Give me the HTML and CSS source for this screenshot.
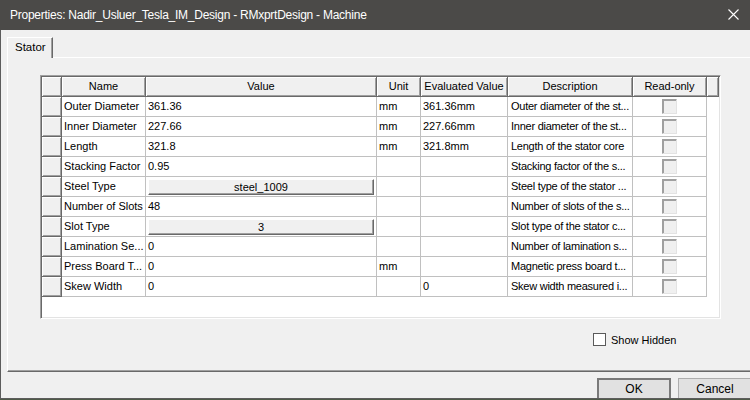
FILE: index.html
```html
<!DOCTYPE html>
<html>
<head>
<meta charset="utf-8">
<link rel="stylesheet" href="styles.css">
</head>
<body>
<div class="dialog">
  <div class="titlebar">
    <span class="title">Properties: Nadir_Usluer_Tesla_IM_Design - RMxprtDesign - Machine</span>
    <svg class="close" width="11" height="11" viewBox="0 0 11 11"><path d="M0.5 0.5 L10.5 10.5 M10.5 0.5 L0.5 10.5" stroke="#ffffff" stroke-width="1.1" fill="none"/></svg>
  </div>
  <div class="content">
    <div class="tabs"><div class="tab">Stator</div></div>
    <div class="panel">
      <div class="grid">
        <table class="props">
          <thead>
            <tr>
              <th class="w-rh"></th>
              <th class="w-name">Name</th>
              <th class="w-value">Value</th>
              <th class="w-unit">Unit</th>
              <th class="w-eval">Evaluated Value</th>
              <th class="w-desc">Description</th>
              <th class="w-ro">Read-only</th>
              <th class="w-extra"></th>
            </tr>
          </thead>
          <tbody>
            <tr><td class="rh"></td><td>Outer Diameter</td><td>361.36</td><td>mm</td><td>361.36mm</td><td class="desc">Outer diameter of the st...</td><td class="ro"><span class="ro-box"></span></td><td class="blank"></td></tr>
            <tr><td class="rh"></td><td>Inner Diameter</td><td>227.66</td><td>mm</td><td>227.66mm</td><td class="desc">Inner diameter of the st...</td><td class="ro"><span class="ro-box"></span></td><td class="blank"></td></tr>
            <tr><td class="rh"></td><td>Length</td><td>321.8</td><td>mm</td><td>321.8mm</td><td class="desc">Length of the stator core</td><td class="ro"><span class="ro-box"></span></td><td class="blank"></td></tr>
            <tr><td class="rh"></td><td>Stacking Factor</td><td>0.95</td><td></td><td></td><td class="desc">Stacking factor of the s...</td><td class="ro"><span class="ro-box"></span></td><td class="blank"></td></tr>
            <tr><td class="rh"></td><td>Steel Type</td><td class="btn-cell"><span class="cell-btn">steel_1009</span></td><td></td><td></td><td class="desc">Steel type of the stator ...</td><td class="ro"><span class="ro-box"></span></td><td class="blank"></td></tr>
            <tr><td class="rh"></td><td>Number of Slots</td><td>48</td><td></td><td></td><td class="desc">Number of slots of the s...</td><td class="ro"><span class="ro-box"></span></td><td class="blank"></td></tr>
            <tr><td class="rh"></td><td>Slot Type</td><td class="btn-cell"><span class="cell-btn">3</span></td><td></td><td></td><td class="desc">Slot type of the stator c...</td><td class="ro"><span class="ro-box"></span></td><td class="blank"></td></tr>
            <tr><td class="rh"></td><td>Lamination Se...</td><td>0</td><td></td><td></td><td class="desc">Number of lamination s...</td><td class="ro"><span class="ro-box"></span></td><td class="blank"></td></tr>
            <tr><td class="rh"></td><td>Press Board T...</td><td>0</td><td>mm</td><td></td><td class="desc">Magnetic press board t...</td><td class="ro"><span class="ro-box"></span></td><td class="blank"></td></tr>
            <tr><td class="rh"></td><td>Skew Width</td><td>0</td><td></td><td>0</td><td class="desc">Skew width measured i...</td><td class="ro"><span class="ro-box"></span></td><td class="blank"></td></tr>
          </tbody>
        </table>
      </div>
      <div class="show-hidden"><span class="cb"></span><span class="cb-label">Show Hidden</span></div>
    </div>
    <div class="buttons">
      <div class="btn btn-default">OK</div>
      <div class="btn">Cancel</div>
    </div>
  </div>
</div>
</body>
</html>
```

FILE: styles.css
```css
html, body {
  margin: 0;
  padding: 0;
  background: #4f5a48;
  overflow: hidden;
}

.dialog {
  width: 750px;
  height: 399px;
  background: #f0f0f0;
  display: flex;
  flex-direction: column;
  overflow: hidden;
  font-family: "Liberation Sans", Arial, sans-serif;
  font-size: 11px;
  color: #000;
}

.titlebar {
  height: 30px;
  flex: none;
  background: #4b4a48;
  color: #ffffff;
  display: flex;
  align-items: center;
  padding-left: 10px;
  font-size: 12px;
  letter-spacing: -0.25px;
}

.title {
  flex: 1;
  white-space: nowrap;
  margin-top: -1px;
}

.close {
  margin-right: 11px;
  margin-top: -2px;
}

.content {
  flex: 1;
  border-left: 1px solid #5c5c5c;
  border-bottom: 1px solid #5c5c5c;
  padding: 7px 0 0 6px;
  display: flex;
  flex-direction: column;
  overflow: hidden;
}

.tabs {
  display: flex;
  height: 20px;
  flex: none;
}

.tab {
  box-sizing: border-box;
  width: 46px;
  height: 21px;
  border-left: 1px solid #ffffff;
  border-top: 1px solid #ffffff;
  border-right: 1px solid #696969;
  box-shadow: inset -1px 0 #a0a0a0;
  background: #f0f0f0;
  padding-left: 7px;
  line-height: 18px;
  font-size: 11.5px;
  position: relative;
  z-index: 1;
}

.panel {
  box-sizing: border-box;
  height: 315px;
  flex: none;
  border-top: 1px solid #ffffff;
  border-left: 1px solid #ffffff;
  border-bottom: 1px solid #696969;
  box-shadow: inset 0 -1px #a0a0a0;
  padding: 17px 0 0 32px;
}

.grid {
  box-sizing: border-box;
  width: 681px;
  height: 244px;
  border: 1px solid;
  border-color: #a0a0a0 #ffffff #ffffff #a0a0a0;
  padding: 1px;
  box-shadow: inset 1px 1px #696969, inset -1px -1px #e3e3e3;
  background: #ffffff;
}

.props {
  table-layout: fixed;
  width: 677px;
  border-collapse: separate;
  border-spacing: 0;
}

.props th,
.props td {
  box-sizing: border-box;
  height: 20px;
  padding: 0 2px;
  white-space: nowrap;
  overflow: hidden;
  font-weight: normal;
  line-height: 19px;
}

.props th {
  text-align: center;
  background: #f0f0f0;
  border-right: 1px solid #696969;
  border-bottom: 1px solid #696969;
  box-shadow: inset 1px 1px #ffffff, inset -1px -1px #a0a0a0;
}

.w-rh { width: 20px; }
.w-name { width: 84px; }
.w-value { width: 231px; }
.w-unit { width: 44px; }
.w-eval { width: 87px; }
.w-desc { width: 125px; }
.w-ro { width: 74px; }
.w-extra { width: 12px; }

.props td {
  text-align: left;
  border-right: 1px solid #c0c0c0;
  border-bottom: 1px solid #c0c0c0;
}

.props td.rh {
  background: #f0f0f0;
  border-right: 1px solid #696969;
  border-bottom: 1px solid #696969;
  box-shadow: inset 1px 1px #ffffff, inset -1px -1px #a0a0a0;
}

.props td.desc {
  padding-left: 3px;
  padding-right: 0;
  letter-spacing: -0.25px;
}

.props td.blank {
  border: none;
}

.props td.ro {
  text-align: center;
  padding: 0;
}

.ro-box {
  display: inline-block;
  box-sizing: border-box;
  width: 15px;
  height: 15px;
  vertical-align: middle;
  margin-top: -2px;
  background: #f0f0f0;
  border: 1px solid;
  border-color: #a0a0a0 #e3e3e3 #e3e3e3 #a0a0a0;
  box-shadow: inset 1px 1px #a0a0a0;
}

.props td.btn-cell {
  padding: 0 2px;
}

.cell-btn {
  display: block;
  box-sizing: border-box;
  height: 16px;
  line-height: 14px;
  text-align: center;
  background: #f0f0f0;
  border: 1px solid;
  border-color: #ffffff #696969 #696969 #ffffff;
  box-shadow: inset -1px -1px #a0a0a0;
}

.show-hidden {
  display: flex;
  align-items: center;
  margin-top: 14px;
  padding-left: 553px;
  height: 13px;
}

.cb {
  box-sizing: border-box;
  width: 13px;
  height: 13px;
  border: 1px solid #5a5a5a;
  background: #ffffff;
  margin-right: 5px;
  flex: none;
}

.cb-label {
  white-space: nowrap;
}

.buttons {
  display: flex;
  gap: 7px;
  margin-top: 6px;
  padding-left: 590px;
  height: 23px;
  flex: none;
}

.btn {
  box-sizing: border-box;
  width: 74px;
  height: 23px;
  flex: none;
  border: 1px solid #adadad;
  background: #e1e1e1;
  text-align: center;
  line-height: 21px;
  font-size: 12px;
}

.btn-default {
  border: 2px solid #7a7a7a;
  line-height: 19px;
}
```
